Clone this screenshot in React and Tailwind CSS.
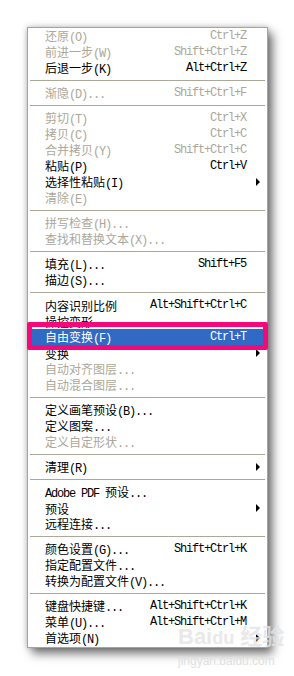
import React from 'react';

const groups = [
  [
    { t: '还原(O)', k: 'Ctrl+Z', d: true },
    { t: '前进一步(W)', k: 'Shift+Ctrl+Z', d: true },
    { t: '后退一步(K)', k: 'Alt+Ctrl+Z' },
  ],
  [{ t: '渐隐(D)...', k: 'Shift+Ctrl+F', d: true }],
  [
    { t: '剪切(T)', k: 'Ctrl+X', d: true },
    { t: '拷贝(C)', k: 'Ctrl+C', d: true },
    { t: '合并拷贝(Y)', k: 'Shift+Ctrl+C', d: true },
    { t: '粘贴(P)', k: 'Ctrl+V' },
    { t: '选择性粘贴(I)', sub: true },
    { t: '清除(E)', d: true },
  ],
  [
    { t: '拼写检查(H)...', d: true },
    { t: '查找和替换文本(X)...', d: true },
  ],
  [
    { t: '填充(L)...', k: 'Shift+F5' },
    { t: '描边(S)...' },
  ],
  [
    { t: '内容识别比例', k: 'Alt+Shift+Ctrl+C' },
    { t: '操控变形' },
    { t: '自由变换(F)', k: 'Ctrl+T', hl: true },
    { t: '变换', sub: true },
    { t: '自动对齐图层...', d: true },
    { t: '自动混合图层...', d: true },
  ],
  [
    { t: '定义画笔预设(B)...' },
    { t: '定义图案...' },
    { t: '定义自定形状...', d: true },
  ],
  [{ t: '清理(R)', sub: true }],
  [
    { t: 'Adobe PDF 预设...' },
    { t: '预设', sub: true },
    { t: '远程连接...' },
  ],
  [
    { t: '颜色设置(G)...', k: 'Shift+Ctrl+K' },
    { t: '指定配置文件...' },
    { t: '转换为配置文件(V)...' },
  ],
  [
    { t: '键盘快捷键...', k: 'Alt+Shift+Ctrl+K' },
    { t: '菜单(U)...', k: 'Alt+Shift+Ctrl+M' },
    { t: '首选项(N)', sub: true },
  ],
];

const mono = "font-['Liberation_Mono',monospace] text-[12px] tracking-[-1.2px] whitespace-pre";

// CJK runs in a CJK font, latin runs in a narrow mono like SimSun's half-width glyphs
const Label = ({ text }) =>
  text.split(/([\u4e00-\u9fff]+)/).filter(Boolean).map((part, i) =>
    /[\u4e00-\u9fff]/.test(part) ? (
      <span key={i} className="font-['Noto_Sans_CJK_SC',sans-serif] text-[12px]">{part}</span>
    ) : (
      <span key={i} className={mono}>{part}</span>
    )
  );

const Row = ({ item }) => {
  const color = item.hl ? 'text-white bg-[#316ac5]' : item.d ? 'text-[#aca899]' : 'text-black';
  return (
    <div className={`relative flex items-center h-4 leading-4 pl-[17px] pr-[21px] ${color}`}>
      <div className="flex-1 whitespace-nowrap">
        <Label text={item.t} />
      </div>
      {item.k && <span className={mono}>{item.k}</span>}
      {item.sub && (
        <span className="absolute right-[7px] top-1/2 -translate-y-1/2 w-0 h-0 border-y-[4px] border-y-transparent border-l-[4px] border-l-black" />
      )}
    </div>
  );
};

export default function App() {
  return (
    <div className="relative w-[294px] h-[676px] bg-white overflow-hidden pt-[27px] pl-[27px]">
      <div className="w-[241px] border border-[#a5a49e] bg-white pb-px shadow-[5px_6px_9px_rgba(0,0,0,0.5),0_0_6px_rgba(0,0,0,0.25)]">
        {groups.map((g, gi) => (
          <div key={gi}>
            {gi > 0 && <div className="mx-[2px] my-[4px] h-px bg-[#aca899]" />}
            {g.map((item, i) => (
              <Row key={i} item={item} />
            ))}
          </div>
        ))}
      </div>

      {/* annotation frame drawn over the selected item */}
      <div className="absolute left-[27px] top-[322px] w-[241px] h-[28px] border-[5px] border-[#f5087a] rounded-[2px]" />

      {/* watermark */}
      <div className="absolute left-[178px] top-[626px] text-[22px] font-bold leading-none text-[#e4e4e4] font-['Liberation_Sans','Noto_Sans_CJK_SC',sans-serif] opacity-80">
        Bai<span className="text-[18px]">du</span> 经验
      </div>
      <div className="absolute left-[178px] top-[655px] text-[12px] leading-none text-[#e0e0e0] font-['Liberation_Sans',sans-serif]">
        jingyan.baidu.com
      </div>
    </div>
  );
}
